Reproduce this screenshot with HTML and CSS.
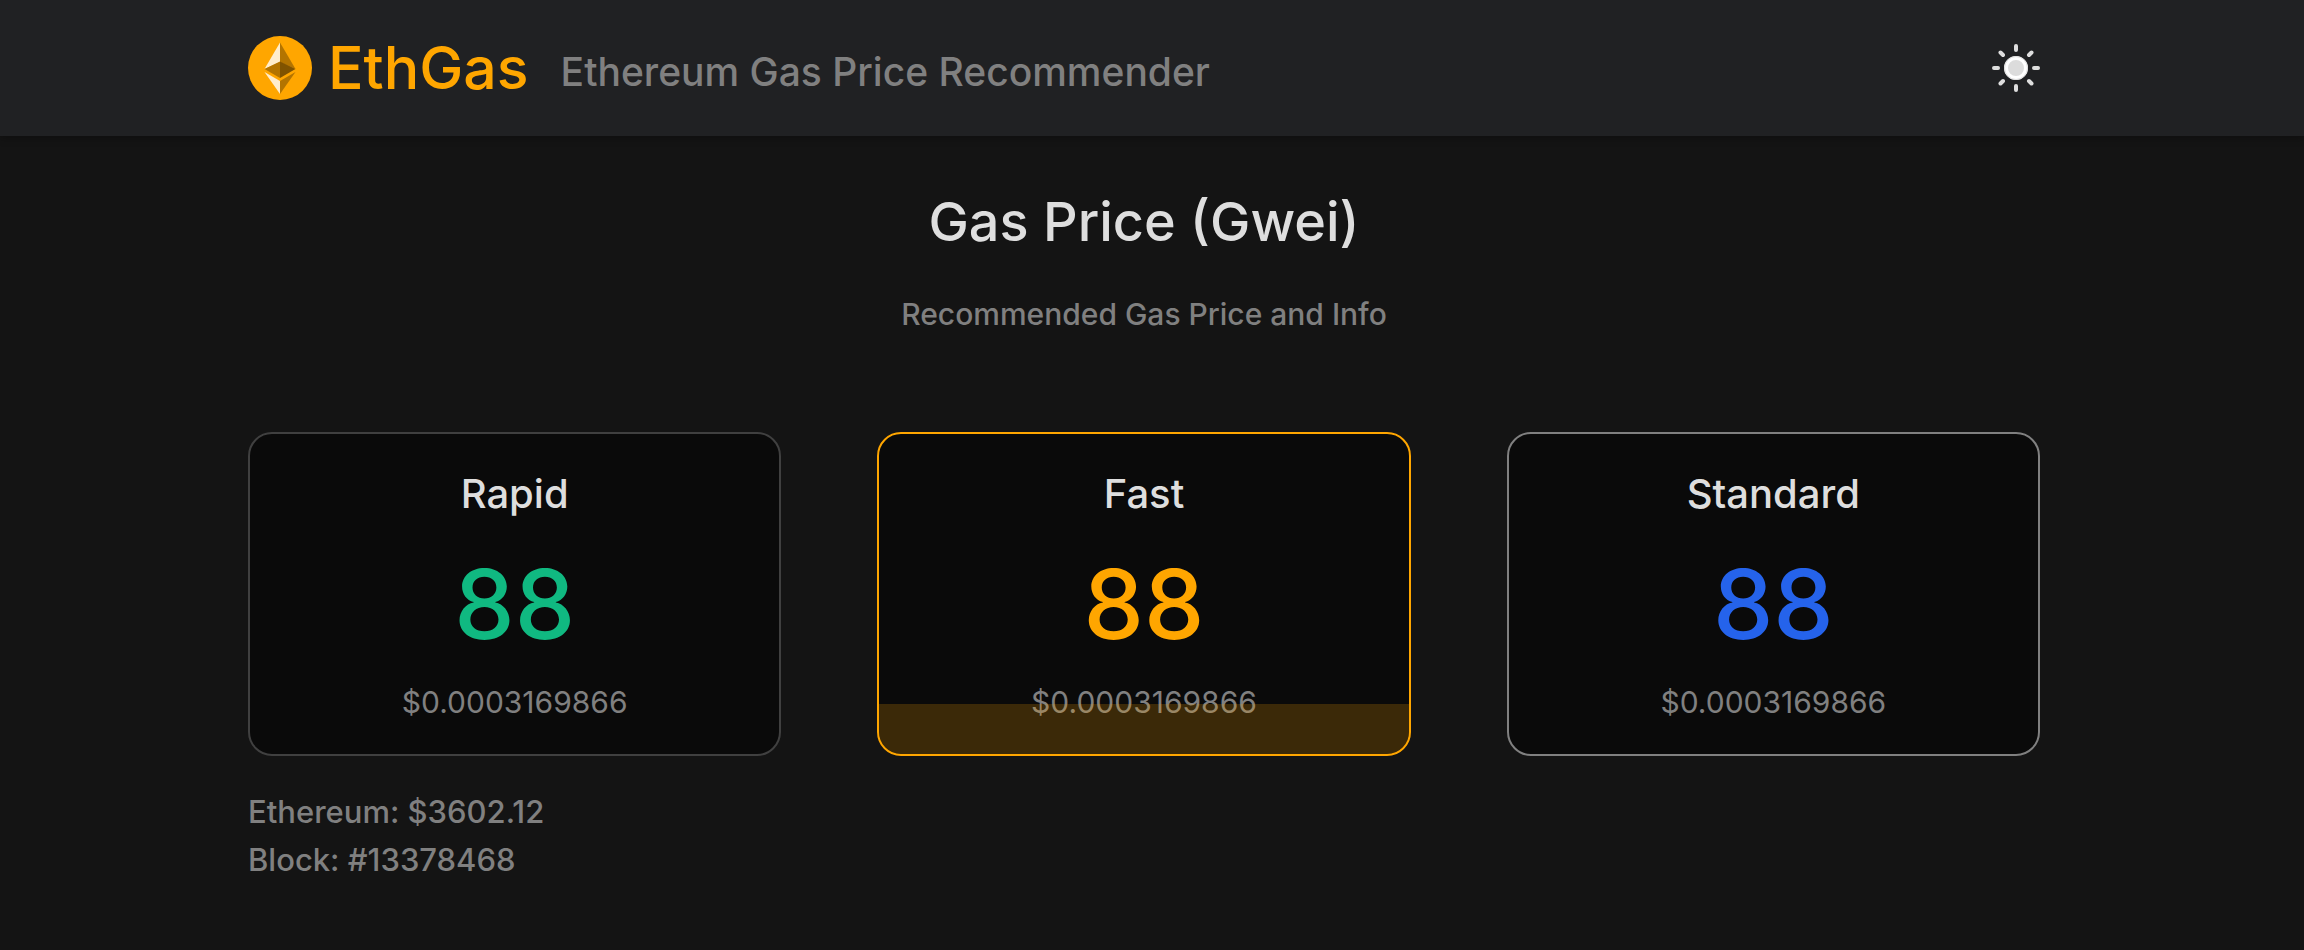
FILE: index.html
```
<!DOCTYPE html>
<html lang="en">
<head>
<meta charset="utf-8">
<meta name="viewport" content="width=device-width, initial-scale=1">
<title>EthGas</title>
<link rel="stylesheet" href="styles.css">
</head>
<body>
<header class="site-header">
  <div class="container header-row">
    <a class="brand" href="#">
      <svg class="brand-logo" viewBox="0 0 64 64" aria-hidden="true">
        <circle cx="32" cy="32" r="32" fill="#ffa600"/>
        <path d="M32 6.500V26L16.500 33z" fill="#ffedcc"/>
        <path d="M32 6.500V26L47.500 33z" fill="#b37400"/>
        <path d="M32 25.500V42L16.500 33z" fill="#b37400"/>
        <path d="M32 25.500V42L47.500 33z" fill="#805300"/>
        <path d="M16.500 36L32 45V58z" fill="#ffedcc"/>
        <path d="M47.500 36L32 45V58z" fill="#b37400"/>
      </svg>
      <span class="brand-name">EthGas</span>
    </a>
    <p class="tagline">Ethereum Gas Price Recommender</p>
    <button class="theme-toggle" type="button" aria-label="Toggle theme">
      <svg class="theme-icon" viewBox="0 0 48 48" aria-hidden="true">
        <circle cx="24" cy="24" r="10" fill="#dcdcdc" stroke="#fff" stroke-width="4"/>
        <circle cx="24" cy="24" r="11.500" fill="none" stroke="#dcdcdc" stroke-width="1"/>
        <path d="M24 2v4M24 42v4M2 24h4M42 24h4M8.500 8.500l2.500 2.500M37 37l2.500 2.500M8.500 39.500l2.500-2.500M37 11l2.500-2.500" stroke="#dedede" stroke-width="4" stroke-linecap="round"/>
      </svg>
    </button>
  </div>
</header>
<main class="container">
  <h1 class="title">Gas Price (Gwei)</h1>
  <p class="subtitle">Recommended Gas Price and Info</p>
  <section class="cards">
    <article class="card card-rapid">
      <h2 class="card-name">Rapid</h2>
      <p class="card-price">88</p>
      <p class="card-cost">$0.0003169866</p>
    </article>
    <article class="card card-fast">
      <h2 class="card-name">Fast</h2>
      <p class="card-price">88</p>
      <p class="card-cost">$0.0003169866</p>
      <div class="card-fill"></div>
    </article>
    <article class="card card-standard">
      <h2 class="card-name">Standard</h2>
      <p class="card-price">88</p>
      <p class="card-cost">$0.0003169866</p>
    </article>
  </section>
  <div class="stats">
    <p>Ethereum: $3602.12</p>
    <p>Block: #13378468</p>
  </div>
</main>
</body>
</html>
```
FILE: styles.css
```
* { box-sizing: border-box; margin: 0; }

body {
  padding-right: 16px;
  background: #141414;
  color: #dedede;
  font-family: Inter, "Liberation Sans", sans-serif;
  font-size: 30px;
  font-weight: 500;
  line-height: 48px;
}

.container {
  max-width: 1792px;
  margin: 0 auto;
}

.site-header {
  margin-right: -16px;
  padding: 24px 16px 24px 0;
  background: #202123;
  box-shadow: 0 2px 8px rgba(0, 0, 0, 0.3);
}

.header-row {
  display: flex;
  align-items: center;
  height: 88px;
}

.brand {
  display: flex;
  align-items: center;
  gap: 16px;
  color: #ffa600;
  text-decoration: none;
}

.brand-logo { width: 64px; height: 64px; }

.brand-name { font-size: 59px; line-height: 72px; }

.tagline {
  margin-left: 32px;
  padding-top: 8px;
  color: #808080;
  font-size: 39px;
}

.theme-toggle {
  display: flex;
  margin-left: auto;
  padding: 0;
  border: 0;
  background: none;
  cursor: pointer;
}

.theme-icon { width: 48px; height: 48px; }

.title {
  padding-top: 46px;
  font-size: 54px;
  font-weight: 500;
  line-height: 80px;
  text-align: center;
}

.subtitle {
  padding-top: 28px;
  color: #808080;
  text-align: center;
}

.cards {
  display: grid;
  grid-template-columns: repeat(3, 1fr);
  gap: 96px;
  margin-top: 94px;
}

.card {
  position: relative;
  overflow: hidden;
  padding: 32px 0 28px;
  border: 2px solid #404040;
  border-radius: 24px;
  background: #0a0a0a;
  text-align: center;
}

.card-name {
  font-size: 40px;
  font-weight: 500;
  line-height: 56px;
}

.card-price {
  padding: 34px 0 26px;
  font-size: 96px;
  line-height: 96px;
}

.card-cost { color: #808080; font-weight: 400; }

.card-rapid .card-price { color: #10b981; }
.card-fast { border-color: #ffa600; }
.card-fast .card-price { color: #ffa600; }
.card-standard { border-color: #808080; }
.card-standard .card-price { color: #2563eb; }

.card-fill {
  position: absolute;
  inset: auto 0 0;
  height: 50px;
  background: rgba(255, 166, 0, 0.2);
}

.stats {
  padding-top: 32px;
  color: #808080;
  font-size: 31px;
}
```
